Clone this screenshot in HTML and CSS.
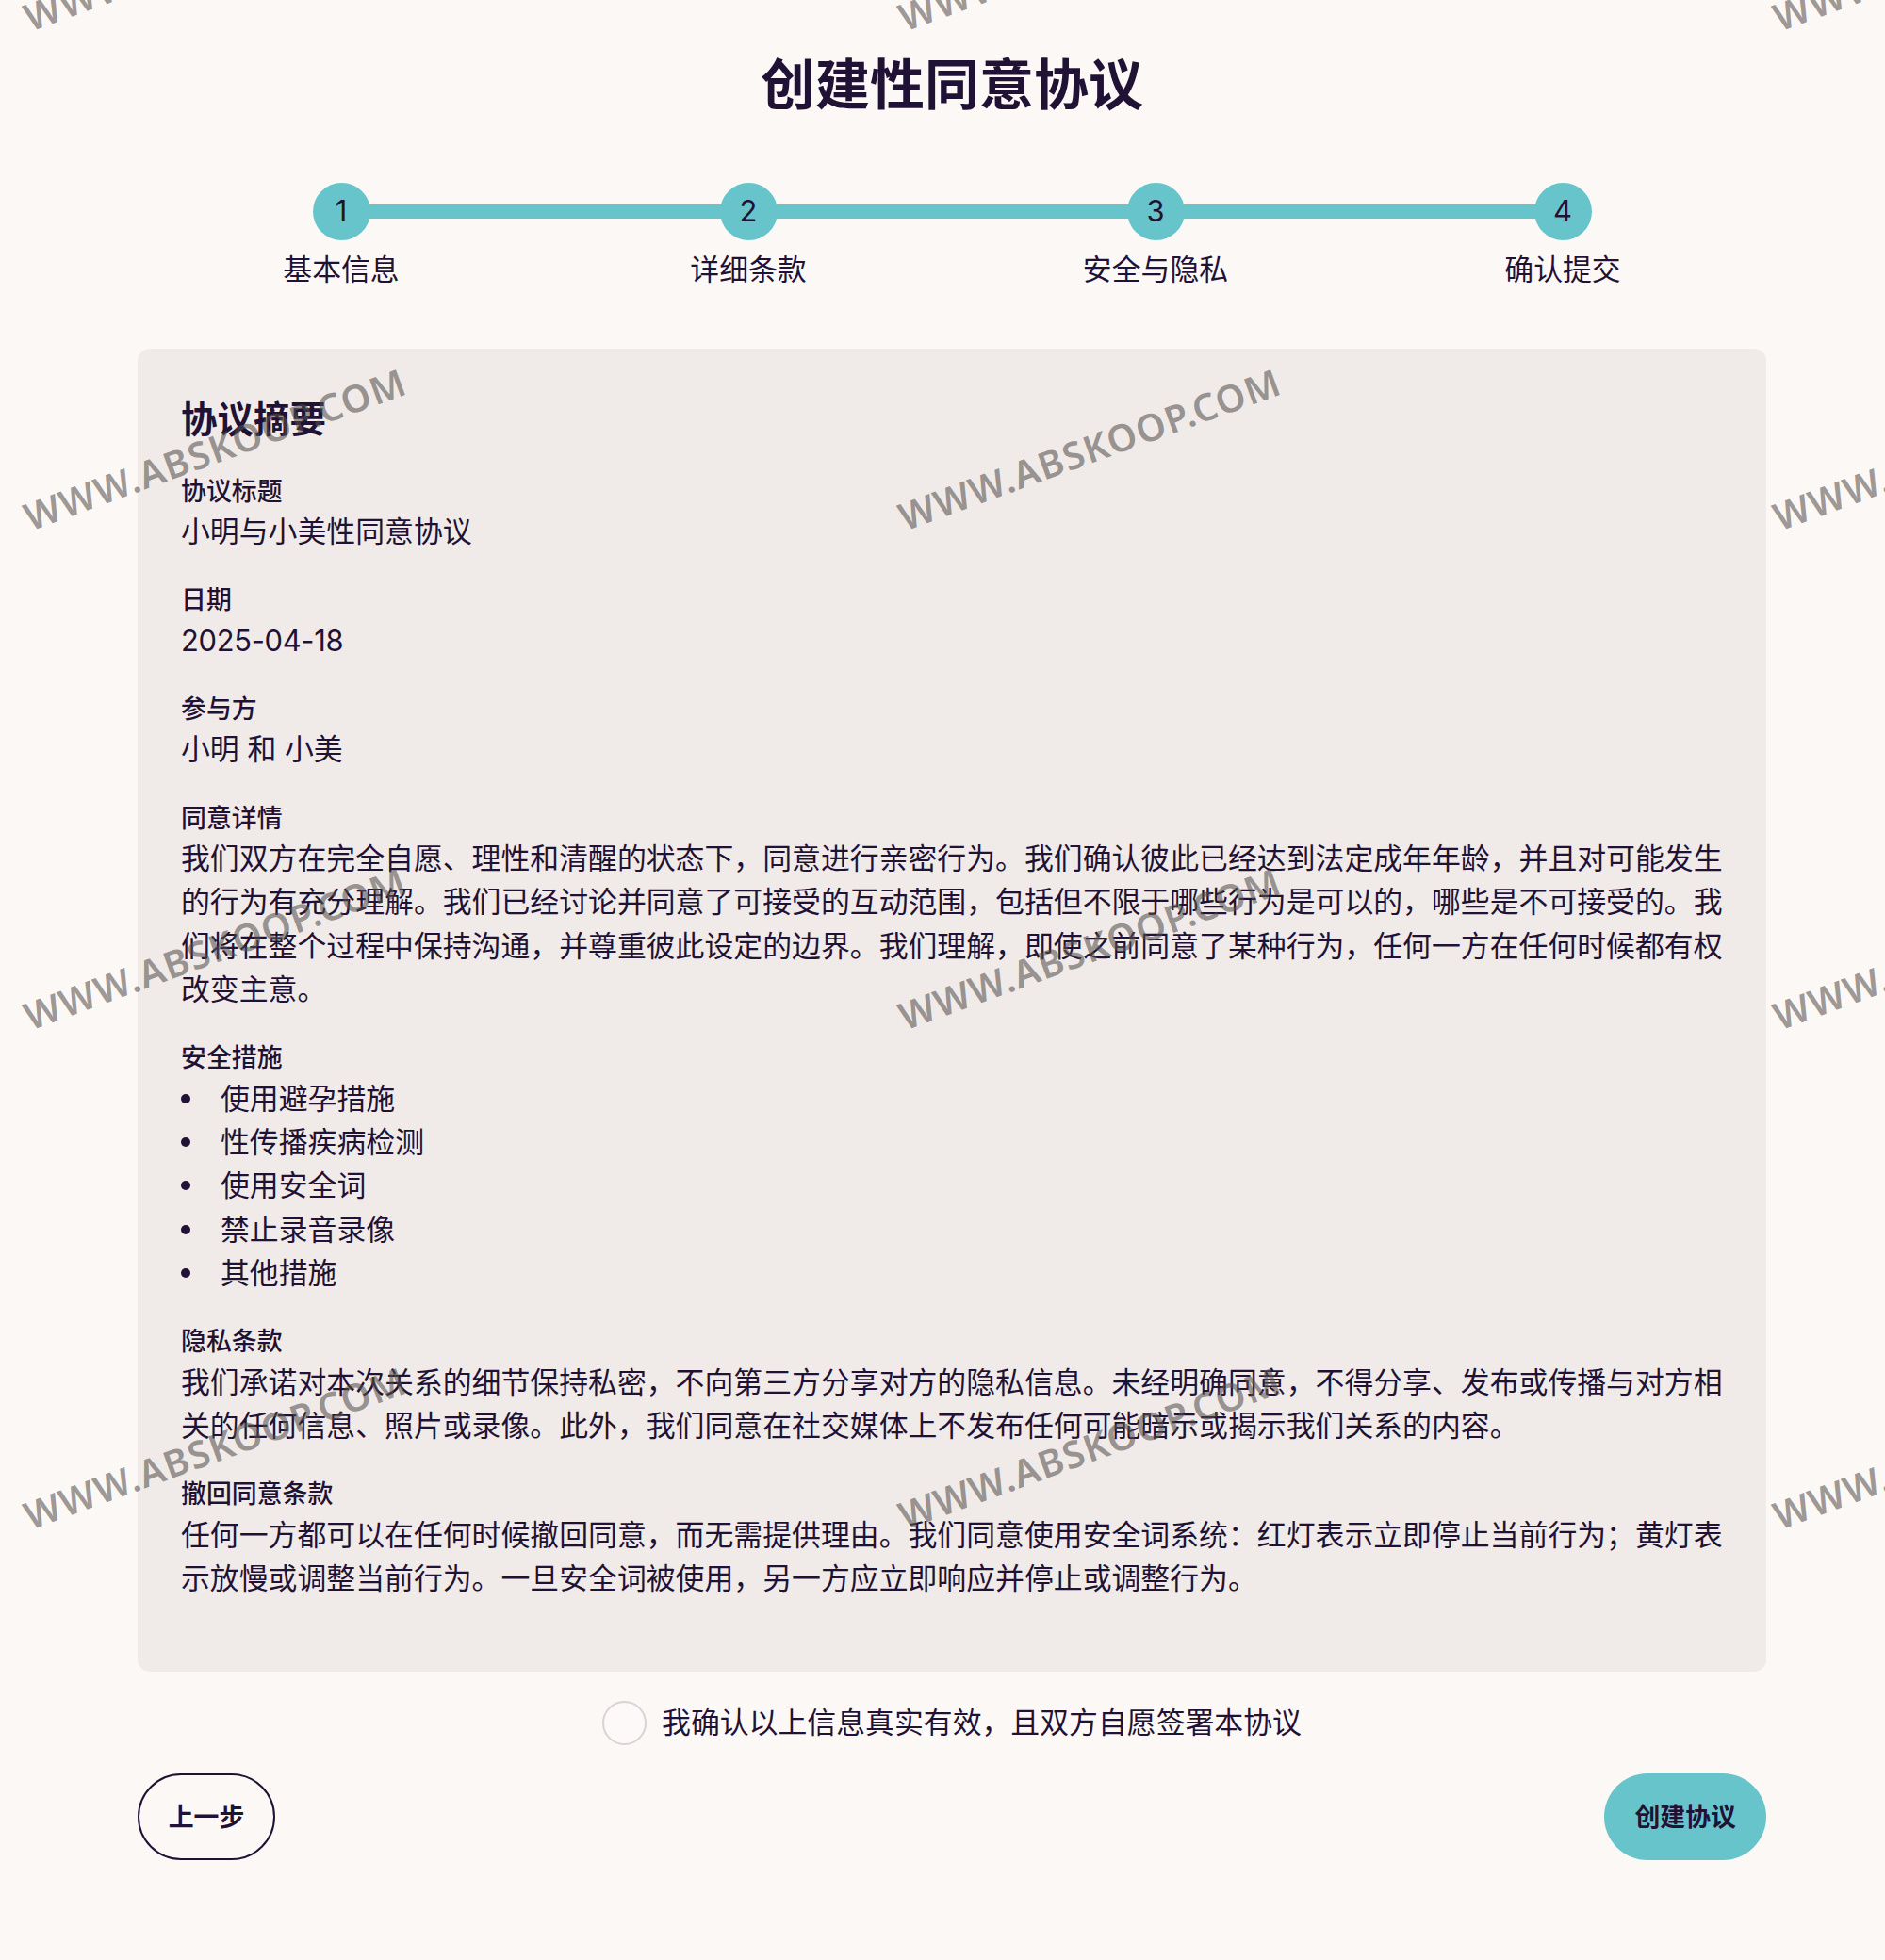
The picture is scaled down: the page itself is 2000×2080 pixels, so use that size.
FILE: index.html
```html
<!DOCTYPE html>
<html lang="zh-CN">
<head>
<meta charset="utf-8">
<title>创建性同意协议</title>
<link rel="stylesheet" href="styles.css">
</head>
<body>
<main class="page">
  <h1 class="title">创建性同意协议</h1>
  <ol class="steps">
    <li class="step"><span class="dot">1</span><span class="step-label">基本信息</span></li>
    <li class="step"><span class="dot">2</span><span class="step-label">详细条款</span></li>
    <li class="step"><span class="dot">3</span><span class="step-label">安全与隐私</span></li>
    <li class="step"><span class="dot">4</span><span class="step-label">确认提交</span></li>
  </ol>
  <section class="card">
    <h2 class="card-title">协议摘要</h2>
    <div class="field"><h3 class="label">协议标题</h3><p class="value">小明与小美性同意协议</p></div>
    <div class="field"><h3 class="label">日期</h3><p class="value value-date">2025-04-18</p></div>
    <div class="field"><h3 class="label">参与方</h3><p class="value">小明 和 小美</p></div>
    <div class="field"><h3 class="label">同意详情</h3><p class="value">我们双方在完全自愿、理性和清醒的状态下，同意进行亲密行为。我们确认彼此已经达到法定成年年龄，并且对可能发生的行为有充分理解。我们已经讨论并同意了可接受的互动范围，包括但不限于哪些行为是可以的，哪些是不可接受的。我们将在整个过程中保持沟通，并尊重彼此设定的边界。我们理解，即使之前同意了某种行为，任何一方在任何时候都有权改变主意。</p></div>
    <div class="field"><h3 class="label">安全措施</h3>
      <ul class="list">
        <li>使用避孕措施</li>
        <li>性传播疾病检测</li>
        <li>使用安全词</li>
        <li>禁止录音录像</li>
        <li>其他措施</li>
      </ul>
    </div>
    <div class="field"><h3 class="label">隐私条款</h3><p class="value">我们承诺对本次关系的细节保持私密，不向第三方分享对方的隐私信息。未经明确同意，不得分享、发布或传播与对方相关的任何信息、照片或录像。此外，我们同意在社交媒体上不发布任何可能暗示或揭示我们关系的内容。</p></div>
    <div class="field"><h3 class="label">撤回同意条款</h3><p class="value">任何一方都可以在任何时候撤回同意，而无需提供理由。我们同意使用安全词系统：红灯表示立即停止当前行为；黄灯表示放慢或调整当前行为。一旦安全词被使用，另一方应立即响应并停止或调整行为。</p></div>
  </section>
  <label class="confirm"><span class="radio"></span><span>我确认以上信息真实有效，且双方自愿签署本协议</span></label>
  <div class="actions">
    <button class="btn btn-outline" type="button">上一步</button>
    <button class="btn btn-primary" type="button">创建协议</button>
  </div>
</main>
<div class="watermarks" aria-hidden="true">
  <span>WWW.ABSKOOP.COM</span><span>WWW.ABSKOOP.COM</span><span>WWW.ABSKOOP.COM</span>
  <span>WWW.ABSKOOP.COM</span><span>WWW.ABSKOOP.COM</span><span>WWW.ABSKOOP.COM</span>
  <span>WWW.ABSKOOP.COM</span><span>WWW.ABSKOOP.COM</span><span>WWW.ABSKOOP.COM</span>
  <span>WWW.ABSKOOP.COM</span><span>WWW.ABSKOOP.COM</span><span>WWW.ABSKOOP.COM</span>
</div>
</body>
</html>
```
FILE: styles.css
```css
* { box-sizing: border-box; }
html, body { margin: 0; padding: 0; }
body {
  position: relative;
  width: 2000px;
  height: 2080px;
  overflow: hidden;
  background: #fcf8f5;
  color: #1f1235;
  font-family: Inter, "Noto Sans CJK SC", sans-serif;
  font-size: 30.86px;
  line-height: 1.5;
}
.page { width: 1728px; margin-left: 146px; padding-top: 47px; }
.title { margin: 0; text-align: center; font-size: 58px; line-height: 87px; font-weight: 700; }
.steps { display: flex; list-style: none; margin: 60px 0 0; padding: 0; }
.step { position: relative; flex: 1; display: flex; flex-direction: column; align-items: center; }
.step:not(:last-child)::after {
  content: ""; position: absolute; left: 50%; width: 100%; top: 23px; height: 15px; background: #67c4cb;
}
.dot {
  position: relative; z-index: 1; width: 61px; height: 61px; border-radius: 50%;
  background: #67c4cb; display: flex; align-items: center; justify-content: center;
}
.step-label { margin-top: 8px; line-height: 46px; }
.card { margin-top: 61px; height: 1404px; padding: 46px 44px 46px 46px; border-radius: 13px; background: #f0ebe8; }
.card-title { margin: 0 0 26.5px; font-size: 38.5px; line-height: 58px; font-weight: 700; }
.field { margin-bottom: 29px; }
.label { margin: 0; font-size: 26.9px; line-height: 40.4px; font-weight: 500; }
.value { margin: 0; line-height: 46.3px; }
.value-date { letter-spacing: -0.3px; }
.list { list-style: none; margin: 0; padding: 0; }
.list li { display: flex; align-items: center; line-height: 46.3px; }
.list li::before {
  content: ""; width: 10px; height: 10px; border-radius: 50%; background: #1f1235; flex: none;
  margin: 0 32px 0 0;
}
.confirm { display: flex; align-items: center; justify-content: center; gap: 16px; margin-top: 31px; height: 47px; }
.radio { width: 47px; height: 47px; border: 2.5px solid #d9d3d6; border-radius: 50%; background: #fdf9f8; }
.actions { display: flex; justify-content: space-between; margin-top: 30px; }
.btn {
  height: 92px; padding: 0 32px; border-radius: 46px; font: inherit;
  font-size: 26.9px; font-weight: 600; color: #1f1235; cursor: pointer;
}
.btn-outline { width: 146px; padding: 0; background: transparent; border: 2.5px solid #1f1235; }
.btn-primary { background: #67c4cb; border: 0; }
.watermarks {
  position: absolute; left: 36px; top: -8px;
  display: grid; grid-template-columns: repeat(3, 928px); grid-auto-rows: 530px;
  pointer-events: none;
}
.watermarks span {
  display: block; width: max-content; height: 52px; line-height: 52px;
  font-family: "Noto Sans", sans-serif; font-size: 40px; font-weight: 600; letter-spacing: 1.3px;
  color: rgba(85, 80, 78, 0.58);
  transform-origin: 0 100%; transform: rotate(-20deg);
}
```
